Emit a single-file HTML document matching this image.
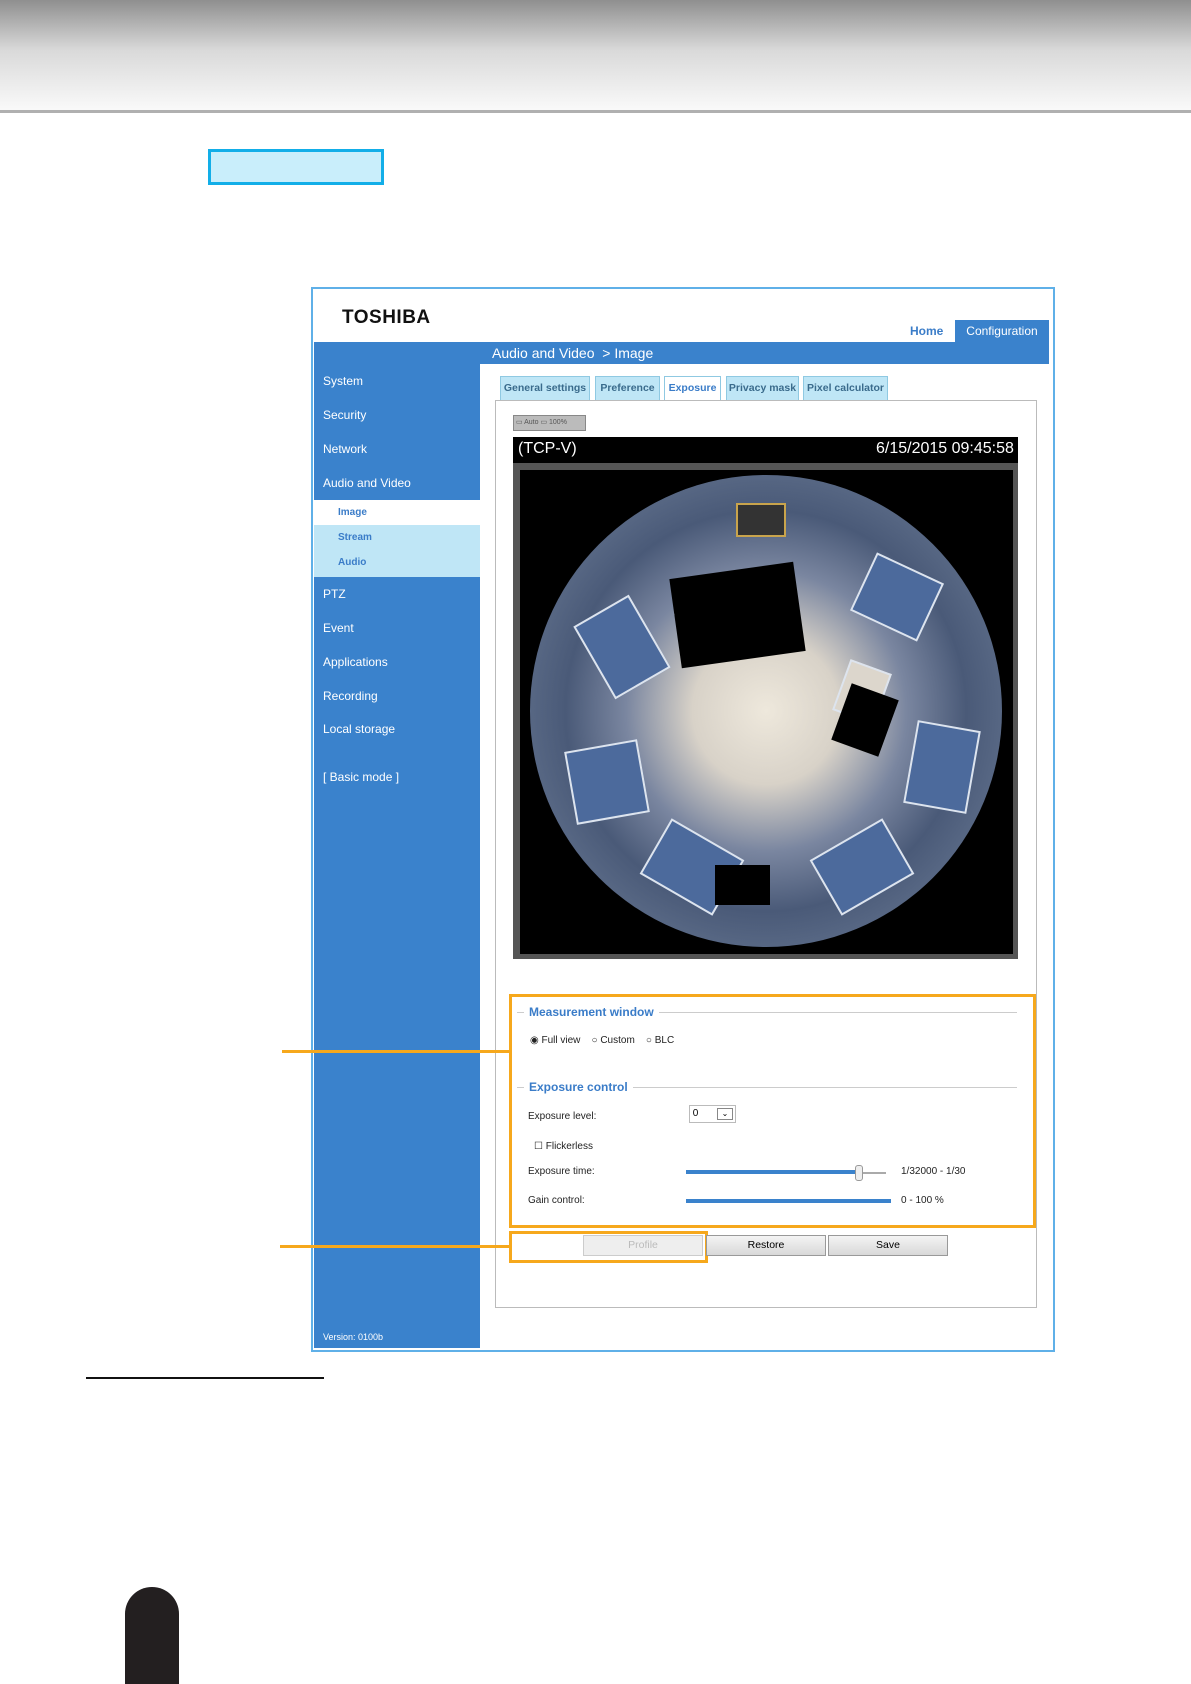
<!DOCTYPE html><html><head><style>
body{margin:0;width:1191px;height:1684px;position:relative;background:#fff;font-family:"Liberation Sans",sans-serif;overflow:hidden}
.a{position:absolute}
.sb{color:#fff;font-size:12px;left:323px}
.sub{font-size:10px;font-weight:bold;color:#3a7cc8;left:338px}
.tab{position:absolute;top:376px;height:23px;background:#bfe6f6;border:1px solid #8fc9e2;font-size:10.5px;color:#3a6b8c;line-height:23px;text-align:center;font-weight:bold}
.btn{position:absolute;top:1235px;height:19px;background:linear-gradient(#f4f4f4,#d8d8d8);border:1px solid #999;font-size:10.5px;text-align:center;line-height:19px}
.lbl{font-size:10px;color:#222}
.k{position:absolute;background:#4c6a9c;border:2px solid #dde4ee}
</style></head><body>
<div class="a" style="left:0;top:0;width:1191px;height:111px;background:linear-gradient(#8f8f8f,#d9d9d9 45%,#fafafa)"></div>
<div class="a" style="left:0;top:110px;width:1191px;height:3px;background:#b0b0b0"></div>
<div class="a" style="left:208px;top:149px;width:170px;height:30px;border:3px solid #12aee8;background:#c9eefb"></div>

<div class="a" style="left:311px;top:287px;width:740px;height:1061px;border:2px solid #5fb0e8;background:#fff"></div>
<div class="a" style="left:342px;top:307px;font-size:19px;font-weight:bold;color:#111;letter-spacing:.5px">TOSHIBA</div>
<div class="a" style="left:910px;top:324px;font-size:12px;color:#3a7cc8;font-weight:bold">Home</div>
<div class="a" style="left:955px;top:320px;width:94px;height:22px;background:#3a82cc;color:#fff;font-size:12px;line-height:22px;text-align:center">Configuration</div>
<div class="a" style="left:314px;top:342px;width:735px;height:22px;background:#3a82cc"></div>
<div class="a" style="left:492px;top:345px;color:#fff;font-size:14px">Audio and Video &nbsp;&gt; Image</div>
<div class="a" style="left:314px;top:364px;width:166px;height:984px;background:#3a82cc"></div>
<div class="a" style="left:314px;top:500px;width:166px;height:25px;background:#fff"></div>
<div class="a" style="left:314px;top:525px;width:166px;height:52px;background:#bfe6f6"></div>
<div class="a sb" style="top:374px">System</div>
<div class="a sb" style="top:408px">Security</div>
<div class="a sb" style="top:442px">Network</div>
<div class="a sb" style="top:476px">Audio and Video</div>
<div class="a sub" style="top:507px">Image</div>
<div class="a sub" style="top:532px">Stream</div>
<div class="a sub" style="top:557px">Audio</div>
<div class="a sb" style="top:587px">PTZ</div>
<div class="a sb" style="top:621px">Event</div>
<div class="a sb" style="top:655px">Applications</div>
<div class="a sb" style="top:689px">Recording</div>
<div class="a sb" style="top:722px">Local storage</div>
<div class="a sb" style="top:770px">[ Basic mode ]</div>
<div class="a sb" style="top:1332px;font-size:9px">Version: 0100b</div>

<div class="tab" style="left:500px;width:88px">General settings</div>
<div class="tab" style="left:595px;width:63px">Preference</div>
<div class="tab" style="left:664px;width:55px;background:#fff;color:#3a7cc8">Exposure</div>
<div class="tab" style="left:726px;width:71px">Privacy mask</div>
<div class="tab" style="left:803px;width:83px">Pixel calculator</div>
<div class="a" style="left:495px;top:400px;width:540px;height:906px;border:1px solid #bbb"></div>
<div class="a" style="left:513px;top:415px;width:71px;height:14px;background:#bbb;border:1px solid #888;font-size:7px;color:#555;line-height:14px">&nbsp;▭ Auto ▭ 100%</div>
<div class="a" style="left:513px;top:437px;width:505px;height:522px;background:#555"></div>
<div class="a" style="left:513px;top:437px;width:505px;height:26px;background:#000"></div>
<div class="a" style="left:518px;top:440px;color:#fff;font-size:16px">(TCP-V)</div>
<div class="a" style="left:876px;top:440px;color:#fff;font-size:16px">6/15/2015 09:45:58</div>
<div class="a" style="left:520px;top:470px;width:493px;height:484px;background:#000"></div>
<div class="a" style="left:530px;top:475px;width:472px;height:472px;border-radius:50%;overflow:hidden;background:radial-gradient(circle at 50% 50%,#eee8dc 0,#d8d2c8 22%,#7a86a0 42%,#4a5a78 60%,#5c6c88 75%,#b8c4d4 86%,#f4f6fa 93%,#fff 97%,#000 100%)">
<div class="k" style="left:60px;top:130px;width:60px;height:80px;transform:rotate(-30deg)"></div>
<div class="k" style="left:330px;top:90px;width:70px;height:60px;transform:rotate(25deg)"></div>
<div class="k" style="left:380px;top:250px;width:60px;height:80px;transform:rotate(10deg)"></div>
<div class="k" style="left:40px;top:270px;width:70px;height:70px;transform:rotate(-10deg)"></div>
<div class="k" style="left:120px;top:360px;width:80px;height:60px;transform:rotate(30deg)"></div>
<div class="k" style="left:290px;top:360px;width:80px;height:60px;transform:rotate(-30deg)"></div>
<div class="k" style="left:150px;top:130px;width:40px;height:40px;transform:rotate(-20deg)"></div>
<div class="k" style="left:310px;top:190px;width:40px;height:50px;transform:rotate(20deg);background:#dcd6cc"></div>
</div>
<div class="a" style="left:675px;top:570px;width:125px;height:90px;background:#000;transform:rotate(-8deg)"></div>
<div class="a" style="left:840px;top:690px;width:50px;height:60px;background:#000;transform:rotate(20deg)"></div>
<div class="a" style="left:715px;top:865px;width:55px;height:40px;background:#000"></div>
<div class="a" style="left:736px;top:503px;width:46px;height:30px;background:#333;border:2px solid #c9a44c"></div>

<div class="a" style="left:509px;top:994px;width:521px;height:228px;border:3px solid #f6a81c"></div>
<div class="a" style="left:282px;top:1050px;width:227px;height:3px;background:#f6a81c"></div>
<div class="a" style="left:280px;top:1245px;width:229px;height:3px;background:#f6a81c"></div>
<div class="a" style="left:509px;top:1231px;width:193px;height:26px;border:3px solid #f6a81c"></div>
<div class="a" style="left:517px;top:1012px;width:500px;height:1px;background:#ccc"></div>
<div class="a" style="left:524px;top:1005px;background:#fff;padding:0 5px;color:#3a7cc8;font-size:12px;font-weight:bold">Measurement window</div>
<div class="a lbl" style="left:530px;top:1035px">◉ Full view &nbsp;&nbsp;&nbsp;○ Custom &nbsp;&nbsp;&nbsp;○ BLC</div>
<div class="a" style="left:517px;top:1087px;width:500px;height:1px;background:#ccc"></div>
<div class="a" style="left:524px;top:1080px;background:#fff;padding:0 5px;color:#3a7cc8;font-size:12px;font-weight:bold">Exposure control</div>
<div class="a lbl" style="left:528px;top:1111px">Exposure level:</div>
<div class="a" style="left:689px;top:1105px;width:45px;height:16px;border:1px solid #bbb;font-size:10px;line-height:16px">&nbsp;0 <span style="float:right;border:1px solid #888;width:14px;height:10px;margin:2px;font-size:8px;line-height:10px;text-align:center">⌄</span></div>
<div class="a lbl" style="left:534px;top:1141px">☐ Flickerless</div>
<div class="a lbl" style="left:528px;top:1166px">Exposure time:</div>
<div class="a" style="left:686px;top:1172px;width:200px;height:2px;background:#aaa"></div>
<div class="a" style="left:686px;top:1170px;width:175px;height:4px;background:#3a82cc"></div>
<div class="a" style="left:855px;top:1165px;width:6px;height:14px;background:#eee;border:1px solid #999;border-radius:3px"></div>
<div class="a lbl" style="left:901px;top:1166px">1/32000 - 1/30</div>
<div class="a lbl" style="left:528px;top:1195px">Gain control:</div>
<div class="a" style="left:686px;top:1199px;width:205px;height:4px;background:#3a82cc"></div>
<div class="a lbl" style="left:901px;top:1195px">0 - 100 %</div>
<div class="btn" style="left:583px;width:118px;color:#bbb;background:#eee;border-color:#ccc">Profile</div>
<div class="btn" style="left:706px;width:118px">Restore</div>
<div class="btn" style="left:828px;width:118px">Save</div>

<div class="a" style="left:86px;top:1377px;width:238px;height:2px;background:#111"></div>
<div class="a" style="left:125px;top:1587px;width:54px;height:97px;background:#231f20;border-radius:27px 27px 0 0"></div>
</body></html>
